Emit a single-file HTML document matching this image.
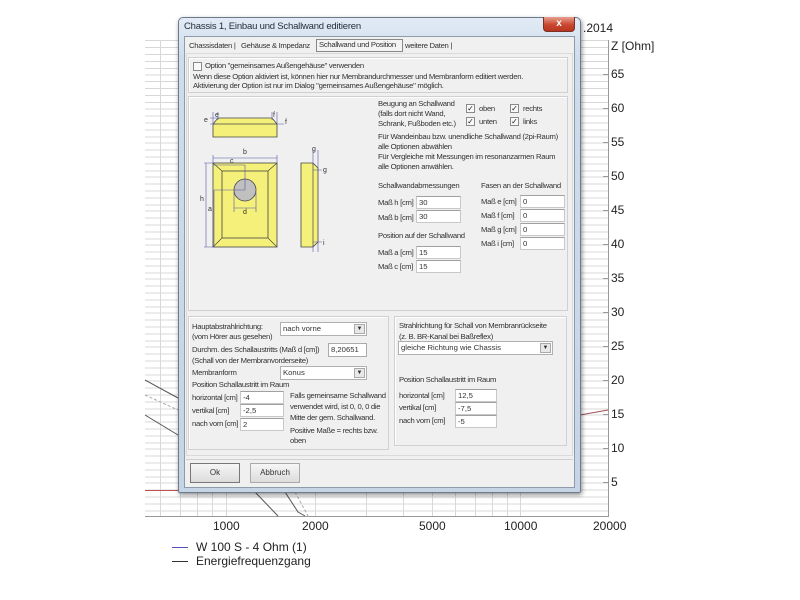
<!DOCTYPE html>
<html><head><meta charset="utf-8"><style>
*{margin:0;padding:0;box-sizing:border-box}
body{width:800px;height:600px;background:#fff;position:relative;overflow:hidden;font-family:"Liberation Sans",sans-serif}
.a{position:absolute;white-space:nowrap}
.t{position:absolute;white-space:nowrap;font-size:7.7px;line-height:10px;color:#333;letter-spacing:-0.3px}
.in{position:absolute;background:#fff;border:1px solid #c8c8c8;border-top-color:#a0a0a0;font-size:7.7px;line-height:11px;padding-left:2px;color:#333}
.cb{position:absolute;width:9px;height:9px;border:1px solid #8a8a8a;background:#f8f8f8;font-size:8px;line-height:7px;text-align:center;color:#222}
.grp{position:absolute;border:1px solid #d0d0d0;box-shadow:inset 1px 1px 0 #fff}
.combo{position:absolute;background:#fff;border:1px solid #b0b0b0;font-size:7.7px;line-height:12px;padding-left:2px;color:#333}
.combo i{position:absolute;right:1px;top:1px;width:11px;height:10px;background:#e8e8e8;border:1px solid #aaa;font-style:normal;font-size:6px;line-height:8px;text-align:center}
.btn{position:absolute;border:1px solid #777;background:linear-gradient(#f6f6f6,#dcdcdc);font-size:8px;text-align:center;line-height:18px;color:#333}
</style></head><body>
<svg class="a" style="left:0;top:0" width="800" height="600">
<g stroke="#d8d8d8">
<path d="M145 40.5H608M145 47.5H608M145 54.5H608M145 61.5H608M145 68.5H608M145 75H608M145 81.5H608M145 88.5H608M145 95.5H608M145 102.5H608M145 109H608M145 116H608M145 123H608M145 130H608M145 137H608M145 143H608M145 150H608M145 157H608M145 164H608M145 171H608M145 177H608M145 184H608M145 191H608M145 198H608M145 205H608M145 211H608M145 218H608M145 225H608M145 232H608M145 239H608M145 245H608M145 252H608M145 259H608M145 266H608M145 273H608M145 279H608M145 286H608M145 293H608M145 300H608M145 307H608M145 313H608M145 320H608M145 327H608M145 334H608M145 341H608M145 347H608M145 354H608M145 361H608M145 368H608M145 375H608M145 381H608M145 388H608M145 395H608M145 402H608M145 409H608M145 415H608M145 422H608M145 429H608M145 436H608M145 443H608M145 449H608M145 456H608M145 463H608M145 470H608M145 477H608M145 483H608M145 490H608M145 497H608M145 504H608M145 511H608"/>
<path d="M160.5 40V516M180.5 40V516M197.5 40V516M212.5 40V516M226.5 40V516M315.5 40V516M366.5 40V516M403.5 40V516M432.5 40V516M455.5 40V516M475.5 40V516M492.5 40V516M507.5 40V516M520.5 40V516"/>
</g>
<path d="M145 516.5H609M608.5 40V516" stroke="#999"/>
<g stroke="#999"><path d="M603 74.5H608M603 108.5H608M603 142.5H608M603 176.5H608M603 210.5H608M603 244.5H608M603 278.5H608M603 312.5H608M603 346.5H608M603 380.5H608M603 414.5H608M603 448.5H608M603 482.5H608"/></g>
<path d="M145 380 L178 398" stroke="#555" fill="none"/>
<path d="M145 395 L178 410" stroke="#aaa" stroke-dasharray="3 2" fill="none"/>
<path d="M145 415 L178 435" stroke="#555" fill="none"/>
<path d="M145 490.5H178" stroke="#c05050"/>
<path d="M255 492 L278 516 M285 492 L298 512 L305 516" stroke="#555" fill="none"/>
<path d="M295 492 L308 516" stroke="#aaa" stroke-dasharray="3 2" fill="none"/>
<path d="M580 415 L608 410" stroke="#a05050" fill="none"/>
<path d="M172 547.5H188" stroke="#5050c0"/><path d="M172 561.5H188" stroke="#333"/>
</svg>
<div class="a" style="left:583px;top:21px;font-size:12px;color:#222">.2014</div>
<div class="a" style="left:611px;top:39px;font-size:12px;color:#222">Z [Ohm]</div>
<div class="a" style="left:611px;top:67px;font-size:12px;color:#222">65</div>
<div class="a" style="left:611px;top:101px;font-size:12px;color:#222">60</div>
<div class="a" style="left:611px;top:135px;font-size:12px;color:#222">55</div>
<div class="a" style="left:611px;top:169px;font-size:12px;color:#222">50</div>
<div class="a" style="left:611px;top:203px;font-size:12px;color:#222">45</div>
<div class="a" style="left:611px;top:237px;font-size:12px;color:#222">40</div>
<div class="a" style="left:611px;top:271px;font-size:12px;color:#222">35</div>
<div class="a" style="left:611px;top:305px;font-size:12px;color:#222">30</div>
<div class="a" style="left:611px;top:339px;font-size:12px;color:#222">25</div>
<div class="a" style="left:611px;top:373px;font-size:12px;color:#222">20</div>
<div class="a" style="left:611px;top:407px;font-size:12px;color:#222">15</div>
<div class="a" style="left:611px;top:441px;font-size:12px;color:#222">10</div>
<div class="a" style="left:611px;top:475px;font-size:12px;color:#222">5</div>
<div class="a" style="left:213px;top:519px;font-size:12px;color:#222">1000</div>
<div class="a" style="left:302px;top:519px;font-size:12px;color:#222">2000</div>
<div class="a" style="left:419px;top:519px;font-size:12px;color:#222">5000</div>
<div class="a" style="left:504px;top:519px;font-size:12px;color:#222">10000</div>
<div class="a" style="left:593px;top:519px;font-size:12px;color:#222">20000</div>
<div class="a" style="left:196px;top:540px;font-size:12px;color:#222">W 100 S - 4 Ohm (1)</div>
<div class="a" style="left:196px;top:554px;font-size:12px;color:#222">Energiefrequenzgang</div>

<div class="a" style="left:178px;top:17px;width:403px;height:476px;background:linear-gradient(#e2ebf5,#cedcec 40px,#c6d5e6);border:1px solid #6b7b8c;border-radius:5px 5px 2px 2px;box-shadow:1px 2px 5px rgba(0,0,0,.45)"></div>
<div class="a" style="left:184px;top:21px;font-size:9.5px;color:#1e2a3a;letter-spacing:-0.2px">Chassis 1, Einbau und Schallwand editieren</div>
<div class="a" style="left:543px;top:17px;width:32px;height:15px;background:linear-gradient(#e8a090,#c9462f 55%,#b83520);border:1px solid #7a3024;border-top:none;border-radius:0 0 4px 4px;color:#fff;font-size:10px;text-align:center;line-height:13px;font-weight:bold">x</div>
<div class="a" style="left:184px;top:36px;width:391px;height:452px;background:#f0f0f0;border:1px solid #8d9bab"></div>
<div class="t" style="left:189px;top:41px">Chassisdaten |</div>
<div class="t" style="left:241px;top:41px">Gehäuse &amp; Impedanz</div>
<div class="a" style="left:316px;top:39px;width:87px;height:13px;border:1px solid #888;background:#f4f4f4"></div>
<div class="t" style="left:319px;top:40px">Schallwand und Position</div>
<div class="t" style="left:405px;top:41px">weitere Daten |</div>
<div class="a" style="left:186px;top:53px;width:387px;height:403px;border:1px solid #dadada;background:#f0f0f0"></div>

<div class="grp" style="left:188px;top:57px;width:380px;height:36px"></div>
<div class="cb" style="left:193px;top:62px"></div>
<div class="t" style="left:205px;top:61px">Option "gemeinsames Außengehäuse" verwenden</div>
<div class="t" style="left:193px;top:72px">Wenn diese Option aktiviert ist, können hier nur Membrandurchmesser und Membranform editiert werden.</div>
<div class="t" style="left:193px;top:81px">Aktivierung der Option ist nur im Dialog "gemeinsames Außengehäuse" möglich.</div>

<div class="grp" style="left:188px;top:96px;width:380px;height:215px"></div>
<svg class="a" style="left:188px;top:96px" width="150" height="160" viewBox="188 96 150 160">
<g fill="#f5f07a" stroke="#444" stroke-width="0.8">
<path d="M218 118H272L277 124V137H213V124Z"/>
<rect x="213" y="163" width="64" height="84"/>
<rect x="222" y="171" width="46" height="67"/>
<path d="M301 163H313L318 168V242L313 247H301Z"/>
</g>
<path d="M213 124H277M213 163L222 171M277 163L268 171M213 247L222 238M277 247L268 238M313 163V247" stroke="#444" stroke-width="0.7" fill="none"/>
<circle cx="245" cy="190" r="11" fill="#c0c0c0" stroke="#444" stroke-width="0.8"/>
<g stroke="#5555aa" stroke-width="0.6" fill="none">
<path d="M213 112V124M218 112V120M272 112V120M277 112V124M210 124H216M277 124H284M210 118H218"/>
<path d="M213 155V163M277 155V163M213 158H277M213 165H245M245 165V190M204 163H215M204 247H215M206 163V247M214 190H245M214 190V247M234 192V212M256 192V212M234 208H256"/>
<path d="M313 150V165M318 150V170M313 170H322M313 242H322M313 245V252M318 240V252"/>
</g>
<g font-family="Liberation Sans" font-size="7" fill="#333">
<text x="204" y="122">e</text><text x="215" y="117">e</text><text x="273" y="117">f</text><text x="285" y="124">f</text>
<text x="243" y="154">b</text><text x="230" y="163">c</text><text x="200" y="201">h</text><text x="208" y="211">a</text>
<text x="243" y="214">d</text><text x="312" y="151">g</text><text x="323" y="172">g</text><text x="323" y="245">i</text>
</g>
</svg>
<div class="t" style="left:378px;top:99px">Beugung an Schallwand</div>
<div class="t" style="left:378px;top:109px">(falls dort nicht Wand,</div>
<div class="t" style="left:378px;top:119px">Schrank, Fußboden etc.)</div>
<div class="cb" style="left:466px;top:104px">✓</div><div class="t" style="left:479px;top:104px">oben</div>
<div class="cb" style="left:510px;top:104px">✓</div><div class="t" style="left:523px;top:104px">rechts</div>
<div class="cb" style="left:466px;top:117px">✓</div><div class="t" style="left:479px;top:117px">unten</div>
<div class="cb" style="left:510px;top:117px">✓</div><div class="t" style="left:523px;top:117px">links</div>
<div class="t" style="left:378px;top:132px">Für Wandeinbau bzw. unendliche Schallwand (2pi-Raum)</div>
<div class="t" style="left:378px;top:142px">alle Optionen abwählen</div>
<div class="t" style="left:378px;top:152px">Für Vergleiche mit Messungen im resonanzarmen Raum</div>
<div class="t" style="left:378px;top:162px">alle Optionen anwählen.</div>
<div class="t" style="left:378px;top:181px">Schallwandabmessungen</div>
<div class="t" style="left:481px;top:181px">Fasen an der Schallwand</div>
<div class="t" style="left:378px;top:198px">Maß h [cm]</div><div class="in" style="left:416px;top:196px;width:45px;height:13px">30</div>
<div class="t" style="left:378px;top:213px">Maß b [cm]</div><div class="in" style="left:416px;top:210px;width:45px;height:13px">30</div>
<div class="t" style="left:378px;top:231px">Position auf der Schallwand</div>
<div class="t" style="left:378px;top:248px">Maß a [cm]</div><div class="in" style="left:416px;top:246px;width:45px;height:13px">15</div>
<div class="t" style="left:378px;top:262px">Maß c [cm]</div><div class="in" style="left:416px;top:260px;width:45px;height:13px">15</div>
<div class="t" style="left:481px;top:197px">Maß e [cm]</div><div class="in" style="left:520px;top:195px;width:45px;height:13px">0</div>
<div class="t" style="left:481px;top:211px">Maß f [cm]</div><div class="in" style="left:520px;top:209px;width:45px;height:13px">0</div>
<div class="t" style="left:481px;top:225px">Maß g [cm]</div><div class="in" style="left:520px;top:223px;width:45px;height:13px">0</div>
<div class="t" style="left:481px;top:239px">Maß i [cm]</div><div class="in" style="left:520px;top:237px;width:45px;height:13px">0</div>

<div class="grp" style="left:188px;top:316px;width:201px;height:134px"></div>
<div class="t" style="left:192px;top:322px">Hauptabstrahlrichtung:</div>
<div class="t" style="left:192px;top:332px">(vom Hörer aus gesehen)</div>
<div class="combo" style="left:280px;top:322px;width:87px;height:14px">nach vorne<i>▼</i></div>
<div class="t" style="left:192px;top:345px">Durchm. des Schallaustritts (Maß d [cm])</div>
<div class="in" style="left:328px;top:343px;width:39px;height:14px;border-color:#aaa">8,20651</div>
<div class="t" style="left:192px;top:356px">(Schall von der Membranvorderseite)</div>
<div class="t" style="left:192px;top:368px">Membranform</div>
<div class="combo" style="left:280px;top:366px;width:87px;height:14px">Konus<i>▼</i></div>
<div class="t" style="left:192px;top:380px">Position Schallaustritt im Raum</div>
<div class="t" style="left:192px;top:393px">horizontal [cm]</div><div class="in" style="left:240px;top:391px;width:44px;height:13px">-4</div>
<div class="t" style="left:192px;top:406px">vertikal [cm]</div><div class="in" style="left:240px;top:404px;width:44px;height:13px">-2,5</div>
<div class="t" style="left:192px;top:419px">nach vorn [cm]</div><div class="in" style="left:240px;top:418px;width:44px;height:13px">2</div>
<div class="t" style="left:290px;top:391px">Falls gemeinsame Schallwand</div>
<div class="t" style="left:290px;top:402px">verwendet wird, ist 0, 0, 0 die</div>
<div class="t" style="left:290px;top:413px">Mitte der gem. Schallwand.</div>
<div class="t" style="left:290px;top:426px">Positive Maße = rechts bzw.</div>
<div class="t" style="left:290px;top:436px">oben</div>

<div class="grp" style="left:394px;top:316px;width:173px;height:130px"></div>
<div class="t" style="left:399px;top:321px">Strahlrichtung für Schall von Membranrückseite</div>
<div class="t" style="left:399px;top:332px">(z. B. BR-Kanal bei Baßreflex)</div>
<div class="combo" style="left:398px;top:341px;width:155px;height:14px">gleiche Richtung wie Chassis<i>▼</i></div>
<div class="t" style="left:399px;top:375px">Position Schallaustritt im Raum</div>
<div class="t" style="left:399px;top:391px">horizontal [cm]</div><div class="in" style="left:455px;top:389px;width:42px;height:13px">12,5</div>
<div class="t" style="left:399px;top:403px">vertikal [cm]</div><div class="in" style="left:455px;top:402px;width:42px;height:13px">-7,5</div>
<div class="t" style="left:399px;top:416px">nach vorn [cm]</div><div class="in" style="left:455px;top:415px;width:42px;height:13px">-5</div>

<div class="a" style="left:186px;top:459px;width:387px;height:27px;border-top:1px solid #d0d0d0;background:#f0f0f0"></div>
<div class="btn" style="left:190px;top:463px;width:50px;height:20px">Ok</div>
<div class="btn" style="left:250px;top:463px;width:50px;height:20px;border-color:#aaa">Abbruch</div>
</body></html>
